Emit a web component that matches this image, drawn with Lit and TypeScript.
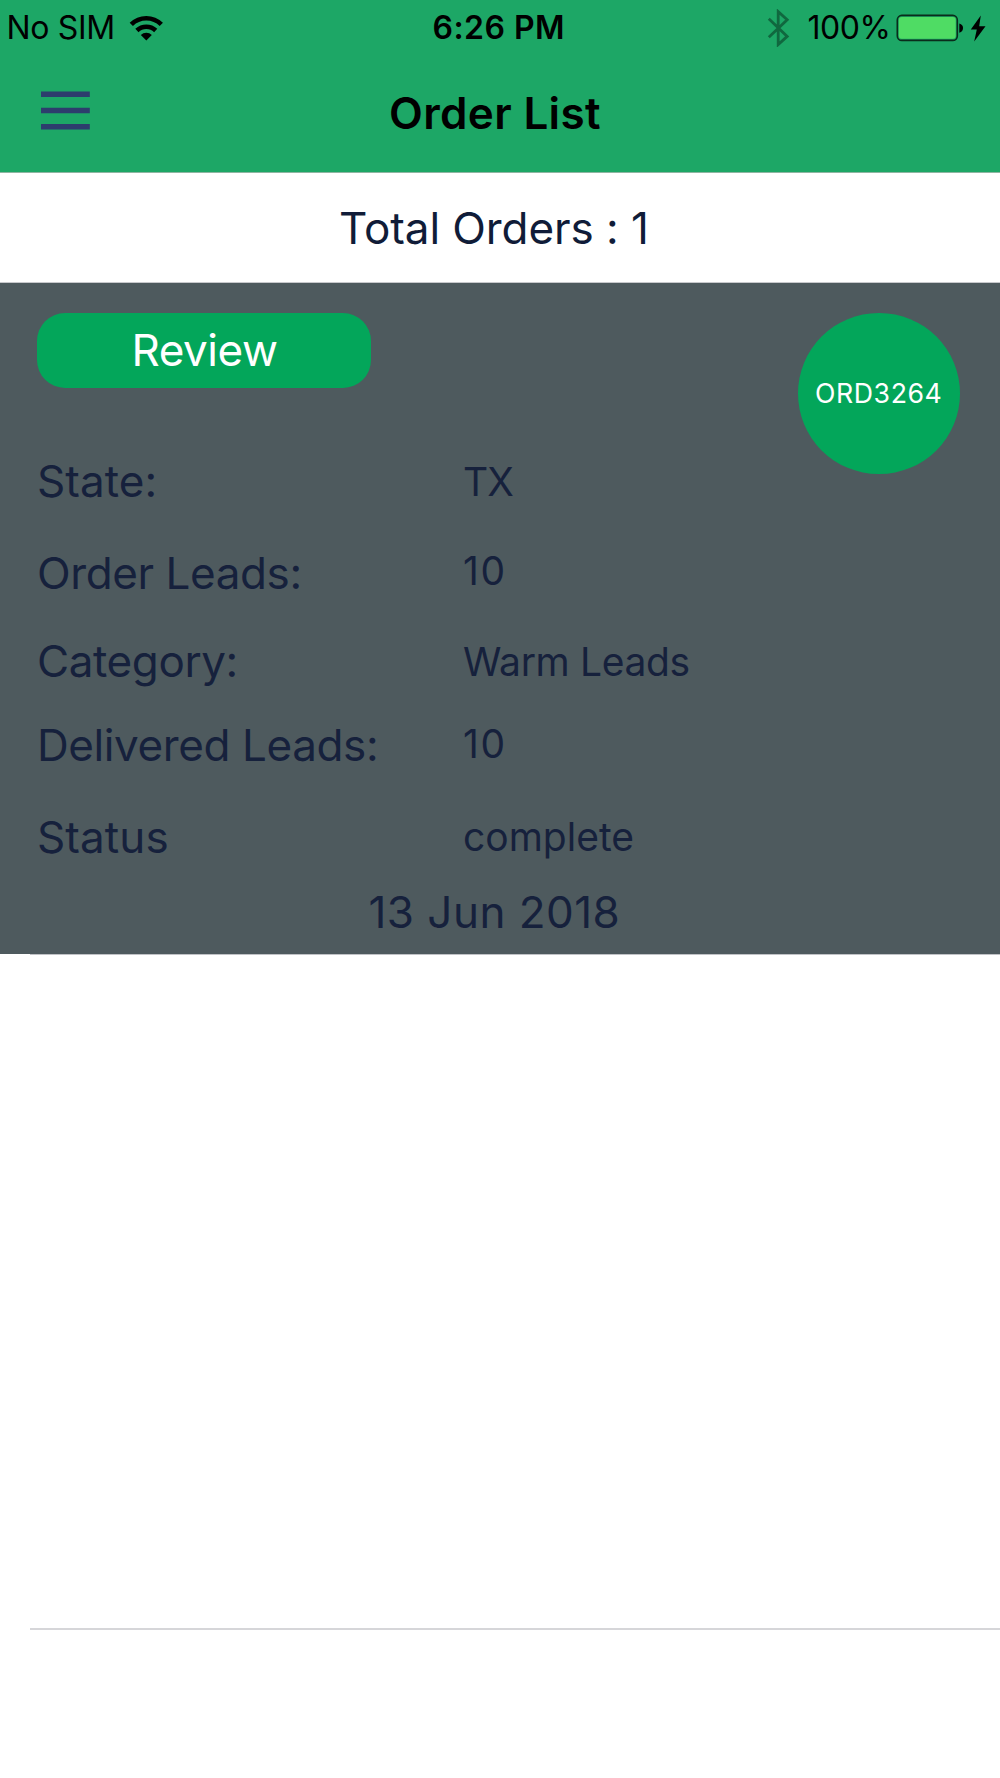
import { LitElement, html, css } from "lit";
import { customElement, property } from "lit/decorators.js";

interface Order {
  id: string;
  state: string;
  leads: number;
  category: string;
  delivered: number;
  status: string;
  date: string;
}

@customElement("status-bar")
export class StatusBar extends LitElement {
  static styles = css`
    :host {
      display: flex;
      align-items: center;
      height: 56px;
      font-size: 32px;
      line-height: 40px;
      color: #000;
      white-space: nowrap;
    }
    svg { display: block; flex: none; }
    .left { display: flex; align-items: center; width: 432.5px; padding-left: 6.5px; box-sizing: border-box; }
    .carrier { width: 122.5px; letter-spacing: -0.34px; }
    .time { width: 334px; font-weight: 600; letter-spacing: 0.45px; }
    .right { display: flex; align-items: center; }
    .percent { width: 88px; margin-left: 18px; letter-spacing: -0.46px; }
    .battery { margin-right: 6px; }
  `;
  render() {
    return html`
      <div class="left">
        <span class="carrier">No SIM</span>
        <svg width="35" height="26" viewBox="0 0 35 26">
          <g fill="none" stroke="#000" stroke-width="4.6">
            <path d="M2.3 9.4a21.2 21.2 0 0 1 30 0" />
            <path d="M7.9 15.500a13.600 13.600 0 0 1 18.800 0" />
          </g>
          <path d="M17.300 25.500l-5.500-5.600a7.800 7.800 0 0 1 11 0z" />
        </svg>
      </div>
      <span class="time">6:26 PM</span>
      <div class="right">
        <svg width="23" height="38" viewBox="0 0 23 38">
          <path d="M1.800 9.800l18.400 17.600-9 8.200V2.600l9 8.200L1.800 28.200" fill="none" stroke="#10683f" stroke-width="2.800" />
        </svg>
        <span class="percent">100%</span>
        <svg class="battery" width="68" height="28" viewBox="0 0 68 28">
          <rect x="1.300" y="1.400" width="60" height="25" rx="4.500" fill="#1da766" stroke="#0a2b1b" stroke-width="1.600" />
          <rect x="2.900" y="3" width="56.800" height="21.800" rx="3" fill="#4fdc64" />
          <path d="M63.300 9.400c5 1 5 8.300 0 9.300z" />
        </svg>
        <svg width="17" height="27" viewBox="0 0 17 27">
          <path d="M10.800 0.500L0.800 14.600h6L4.200 26.500 15.500 11.200H9.200z" />
        </svg>
      </div>
    `;
  }
}

@customElement("order-card")
export class OrderCard extends LitElement {
  @property({ attribute: false }) order!: Order;

  static styles = css`
    :host {
      display: block;
      box-sizing: border-box;
      height: 672px;
      padding: 29.5px 40.5px 0 37px;
      background: #4e5a5e;
      border-top: 1px solid #c8c9cc;
      color: #16213c;
      font-size: 44px;
      white-space: nowrap;
    }
    .top { display: flex; justify-content: space-between; height: 123.5px; }
    .review {
      width: 334px;
      height: 75px;
      padding: 0 0 1px 94.5px;
      border: 0;
      border-radius: 28px;
      background: #03a65a;
      color: #fff;
      font: inherit;
      letter-spacing: -0.44px;
      text-align: left;
    }
    .badge {
      display: flex;
      align-items: center;
      justify-content: center;
      width: 161.5px;
      height: 161.5px;
      border-radius: 50%;
      background: #03a65a;
      color: #fff;
      font-size: 26.7px;
      letter-spacing: 0.56px;
    }
    .details { display: grid; grid-template-columns: 426px 1fr; grid-template-rows: 90px 93px 84px 84px 99px; align-items: center; margin: 0; }
    dt, dd { margin: 0; line-height: 52px; }
    dt.tight { letter-spacing: -0.4px; }
    dt.loose { letter-spacing: 0.09px; }
    dd { font-size: 39px; }
    .lift { padding-bottom: 4px; }
    .raise { padding-bottom: 2px; }
    .drop { padding-top: 1px; }
    .state { letter-spacing: -0.8px; }
    .count { letter-spacing: 1.64px; }
    .category { letter-spacing: -0.36px; }
    .date { padding-left: 331.5px; line-height: 53px; letter-spacing: 0.46px; }
  `;
  render() {
    const o = this.order;
    return html`
      <div class="top">
        <button class="review">Review</button>
        <div class="badge">${o.id}</div>
      </div>
      <dl class="details">
        <dt class="loose">State:</dt><dd class="state drop">${o.state}</dd>
        <dt class="tight">Order Leads:</dt><dd class="count lift">${o.leads}</dd>
        <dt class="tight">Category:</dt><dd class="category drop">${o.category}</dd>
        <dt class="tight">Delivered Leads:</dt><dd class="count raise">${o.delivered}</dd>
        <dt class="loose">Status</dt><dd>${o.status}</dd>
      </dl>
      <div class="date">${o.date}</div>
    `;
  }
}

@customElement("app-root")
export class AppRoot extends LitElement {
  static styles = css`
    :host {
      display: flex;
      flex-direction: column;
      width: 100%;
      height: 1778px;
      overflow: hidden;
      background: #fff;
      font-family: Inter, "Liberation Sans", sans-serif;
      white-space: nowrap;
    }
    .header { box-sizing: border-box; height: 173px; background: #1da766; border-bottom: 1px solid #8fb5a2; }
    .nav { display: flex; padding-left: 40.5px; height: 116px; }
    .menu { display: block; width: 348.5px; height: 116px; }
    .title { margin: 0; padding-top: 31px; font-size: 44px; line-height: 52px; font-weight: 600; letter-spacing: 0.34px; color: #000; }
    .total { height: 109px; padding-left: 339px; font-size: 44px; line-height: 110px; letter-spacing: -0.07px; color: #101c38; }
    .empty { height: 673px; margin-left: 30px; border-top: 1px solid #c0c2c6; border-bottom: 2px solid #d6d6d9; }
  `;
  private order: Order = {
    id: "ORD3264",
    state: "TX",
    leads: 10,
    category: "Warm Leads",
    delivered: 10,
    status: "complete",
    date: "13 Jun 2018",
  };
  render() {
    return html`
      <header class="header">
        <status-bar></status-bar>
        <div class="nav">
          <svg class="menu" viewBox="0 0 348.5 116">
            <path d="M0 35.5h48.800v5.600H0zM0 51.700h48.800v5.600H0zM0 68h48.800v5.600H0z" fill="#2d3d6d" />
          </svg>
          <h1 class="title">Order List</h1>
        </div>
      </header>
      <div class="total">Total Orders : 1</div>
      <order-card .order=${this.order}></order-card>
      <div class="empty"></div>
    `;
  }
}
